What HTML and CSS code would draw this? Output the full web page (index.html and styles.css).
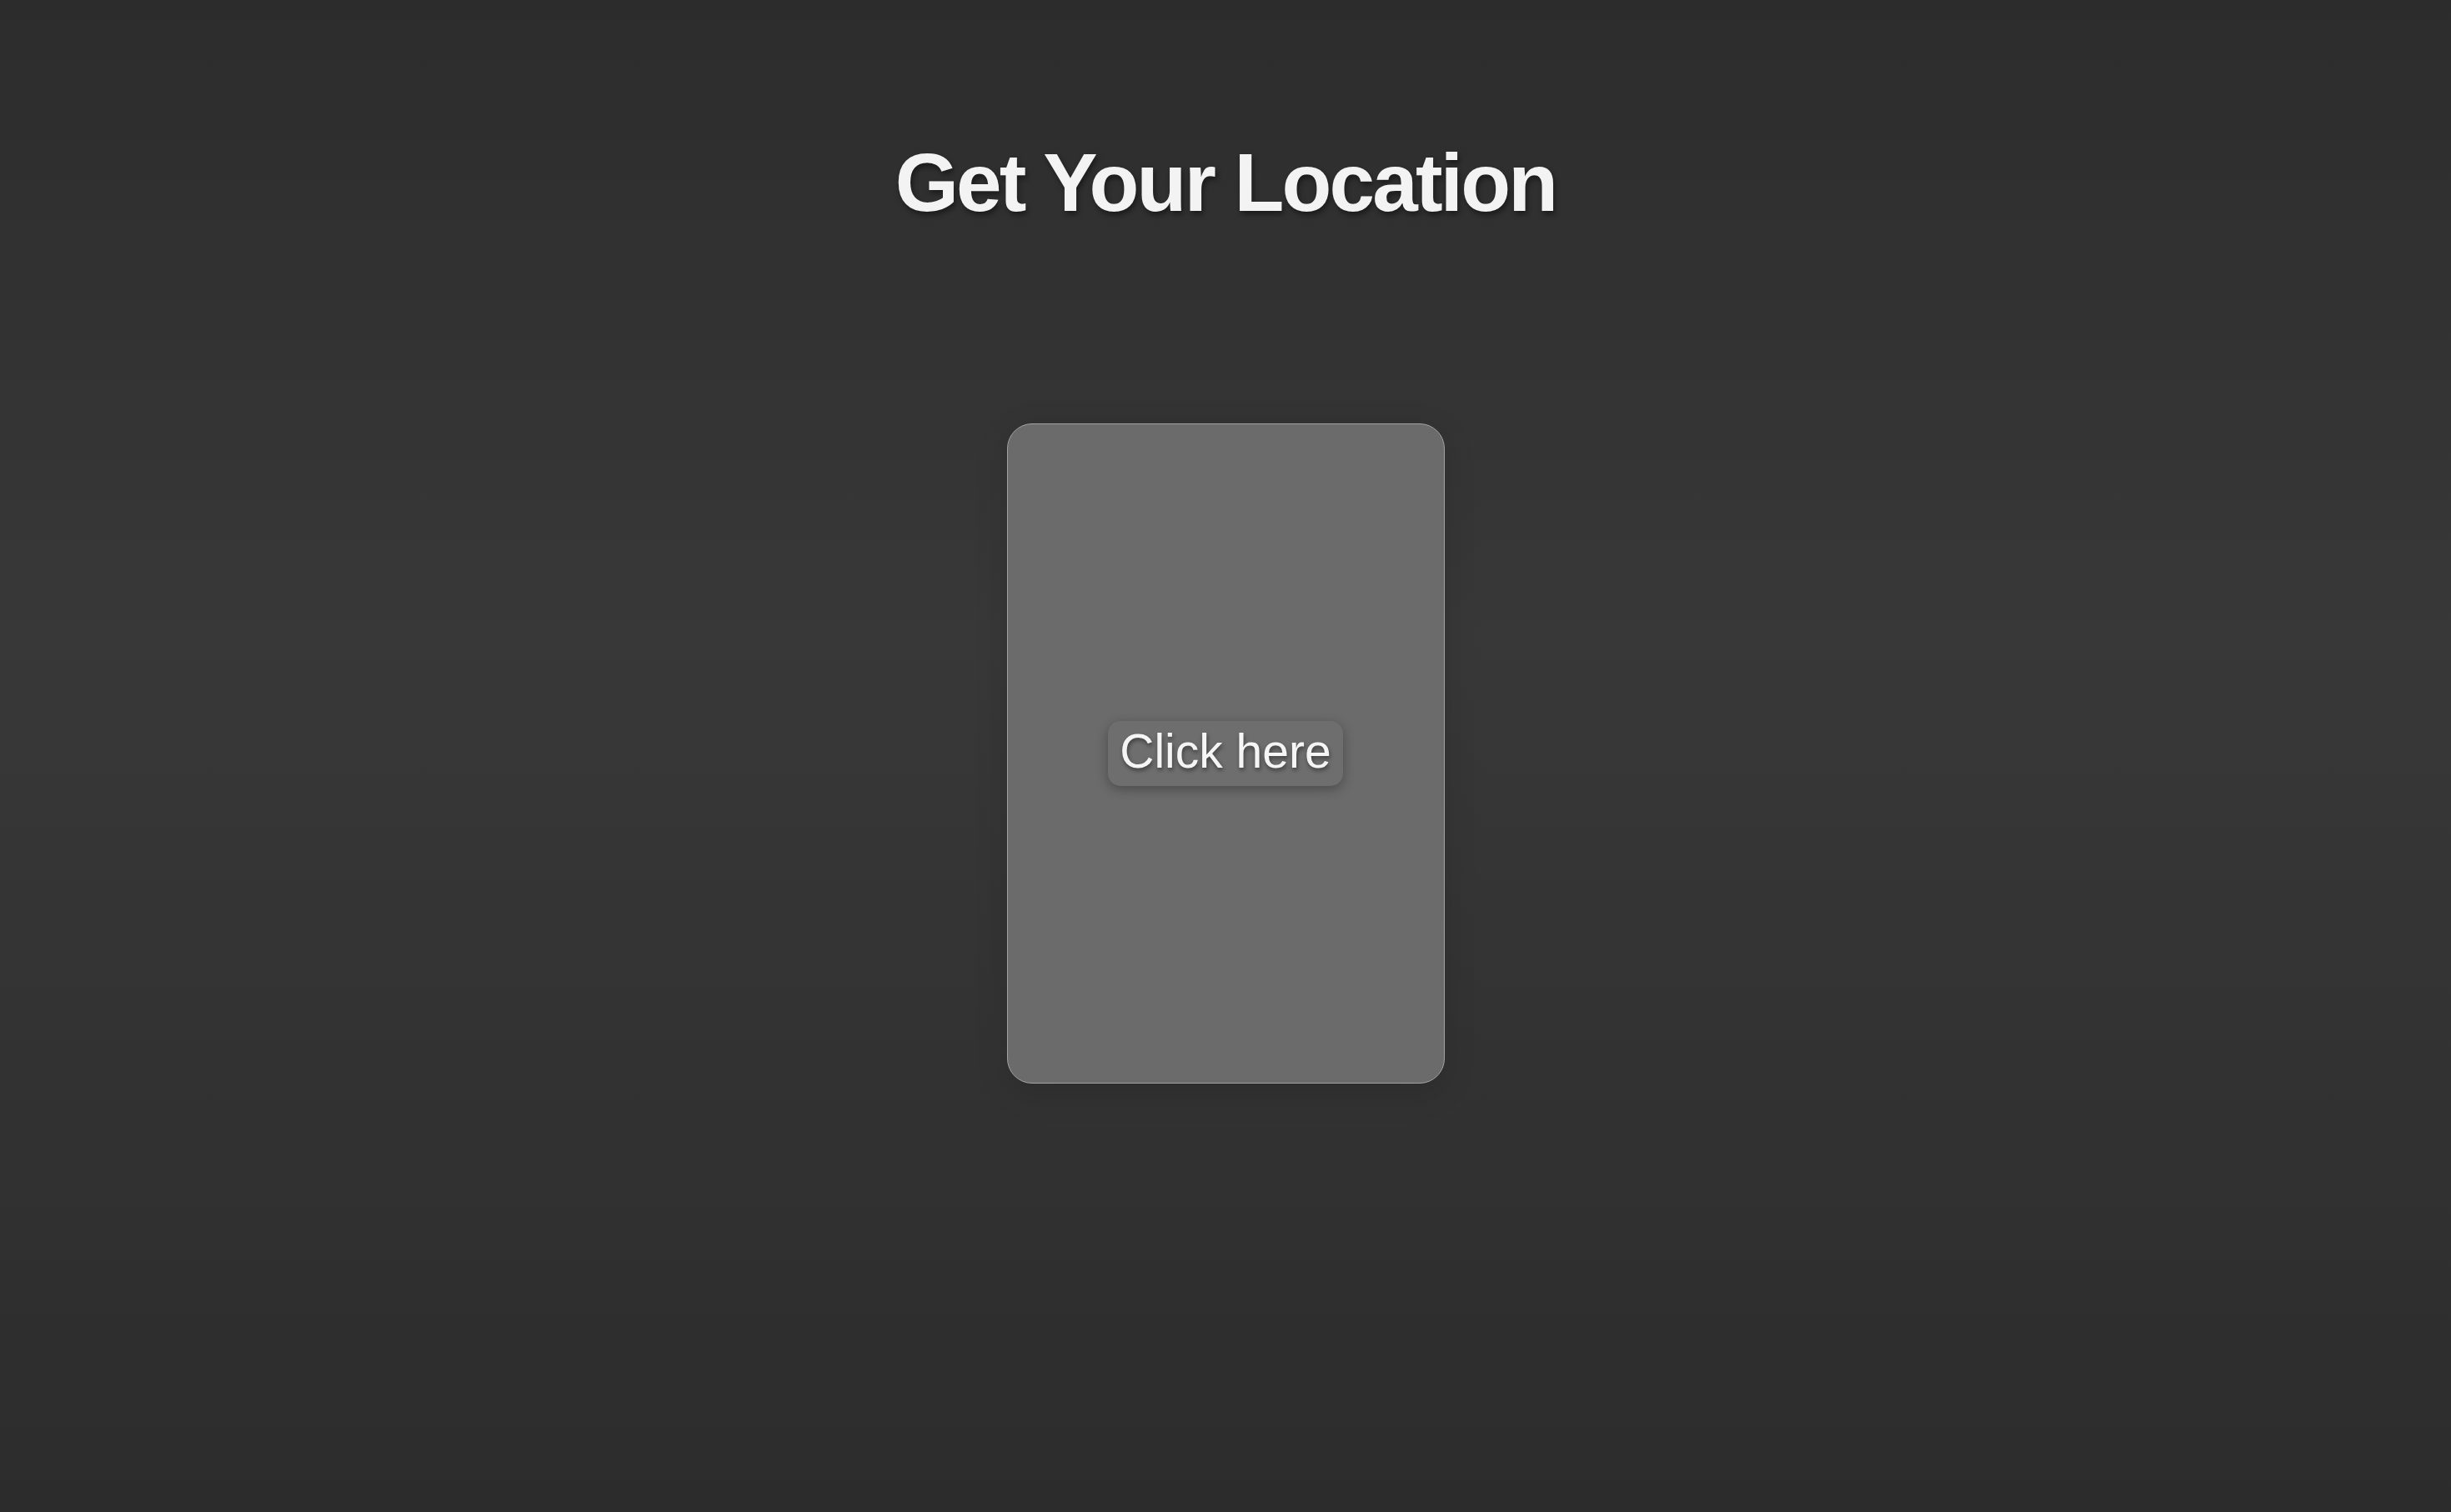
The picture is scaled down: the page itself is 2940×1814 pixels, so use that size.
FILE: index.html
```html
<!DOCTYPE html>
<html lang="en">
<head>
<meta charset="utf-8">
<title>Get Your Location</title>
<link rel="stylesheet" href="styles.css">
</head>
<body>
<main class="page">
  <header class="top">
    <h1 class="title">Get Your Location</h1>
  </header>
  <section class="card">
    <button class="btn" type="button">Click here</button>
  </section>
  <div class="bottom"></div>
</main>
</body>
</html>
```
FILE: styles.css
```css
html, body {
  margin: 0;
  padding: 0;
  height: 100%;
}
body {
  background: linear-gradient(180deg, #2c2c2c 0%, #383838 42%, #2c2c2c 100%);
  font-family: "Liberation Sans", Arial, sans-serif;
}
.page {
  height: 100vh;
  display: grid;
  grid-template-rows: 1fr auto 1fr;
  justify-items: center;
}
.top {
  align-self: start;
  padding-top: 163px;
}
.title {
  margin: 0;
  font-size: 98px;
  font-weight: 700;
  letter-spacing: -2.8px;
  color: #f3f3f3;
  text-shadow: 2px 4px 6px rgba(0, 0, 0, 0.45);
  line-height: normal;
}
.card {
  box-sizing: border-box;
  width: 525px;
  height: 792px;
  margin-top: -6px;
  background: #6b6b6b;
  border: 1.5px solid #a3a3a3;
  border-radius: 30px;
  box-shadow: 0 10px 40px rgba(0, 0, 0, 0.12);
  display: flex;
  align-items: center;
  justify-content: center;
}
.btn {
  font-family: "Liberation Sans", Arial, sans-serif;
  font-size: 57px;
  color: #f5f5f5;
  background: #6e6e6e;
  border: none;
  border-radius: 15px;
  padding: 3px 14px 9px;
  line-height: normal;
  text-shadow: 1px 3px 5px rgba(0, 0, 0, 0.45);
  box-shadow: 0 4px 14px rgba(0, 0, 0, 0.3);
  cursor: pointer;
}
```
